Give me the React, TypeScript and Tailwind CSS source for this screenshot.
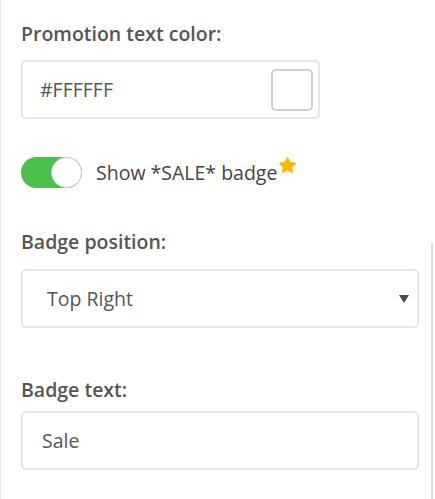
import { Star } from 'lucide-react'

const font = { fontFamily: '"Open Sans", "Noto Sans", sans-serif' }

export default function App() {
  return (
    <div
      className="relative h-[499px] w-[435px] overflow-hidden border-l border-[#ebebeb] bg-white pl-[20px] text-[#555]"
      style={font}
    >
      {/* right edge line */}
      <div className="absolute right-[2px] top-[243px] bottom-0 w-[2px] bg-[#dcdcf7]" />

      <div className="pt-[20px]">
        <label className="block text-[19.5px] leading-[28px] font-semibold text-[#555]">
          Promotion text color:
        </label>
        <div className="mt-[12px] flex h-[59px] w-[299px] items-center justify-between rounded-[5px] border-2 border-[#e6e6e6] pl-[17px] pr-[5px]">
          <span className="text-[19.5px] text-[#555]">#FFFFFF</span>
          <span className="h-[42px] w-[42px] rounded-[5px] border-2 border-[#cfcfcf] bg-white" />
        </div>

        {/* toggle */}
        <div className="mt-[38px] flex h-[31px] items-center">
          <div className="relative h-[31px] w-[61px] rounded-full bg-[#4cc04c]">
            <span className="absolute right-0 top-0 h-[31px] w-[31px] rounded-full border border-[#d6d6d6] bg-white" />
          </div>
          <span className="ml-[14px] text-[19.5px] text-[#444]">Show *SALE* badge</span>
          <Star className="-mt-[14px] ml-[1px] h-[19px] w-[19px] fill-[#ffb400] text-[#ffb400]" strokeWidth={1} />
        </div>

        <label className="mt-[40px] block text-[19.5px] leading-[28px] font-semibold text-[#555]">
          Badge position:
        </label>
        <div className="mt-[13px] flex h-[59px] w-[398px] items-center justify-between rounded-[5px] border-2 border-[#e6e6e6] pl-[24px] pr-[6px]">
          <span className="text-[19.5px] text-[#555]">Top Right</span>
          <svg width="10" height="8" viewBox="0 0 10 8" className="mr-[2px]">
            <path d="M0 0 H10 L5 8 Z" fill="#4a4a4a" />
          </svg>
        </div>

        <label className="mt-[48px] block text-[19.5px] leading-[28px] font-semibold text-[#555]">
          Badge text:
        </label>
        <div className="mt-[7px] flex h-[59px] w-[398px] items-center rounded-[5px] border-2 border-[#e6e6e6] pl-[19px]">
          <span className="text-[19.5px] text-[#555]">Sale</span>
        </div>
      </div>
    </div>
  )
}
